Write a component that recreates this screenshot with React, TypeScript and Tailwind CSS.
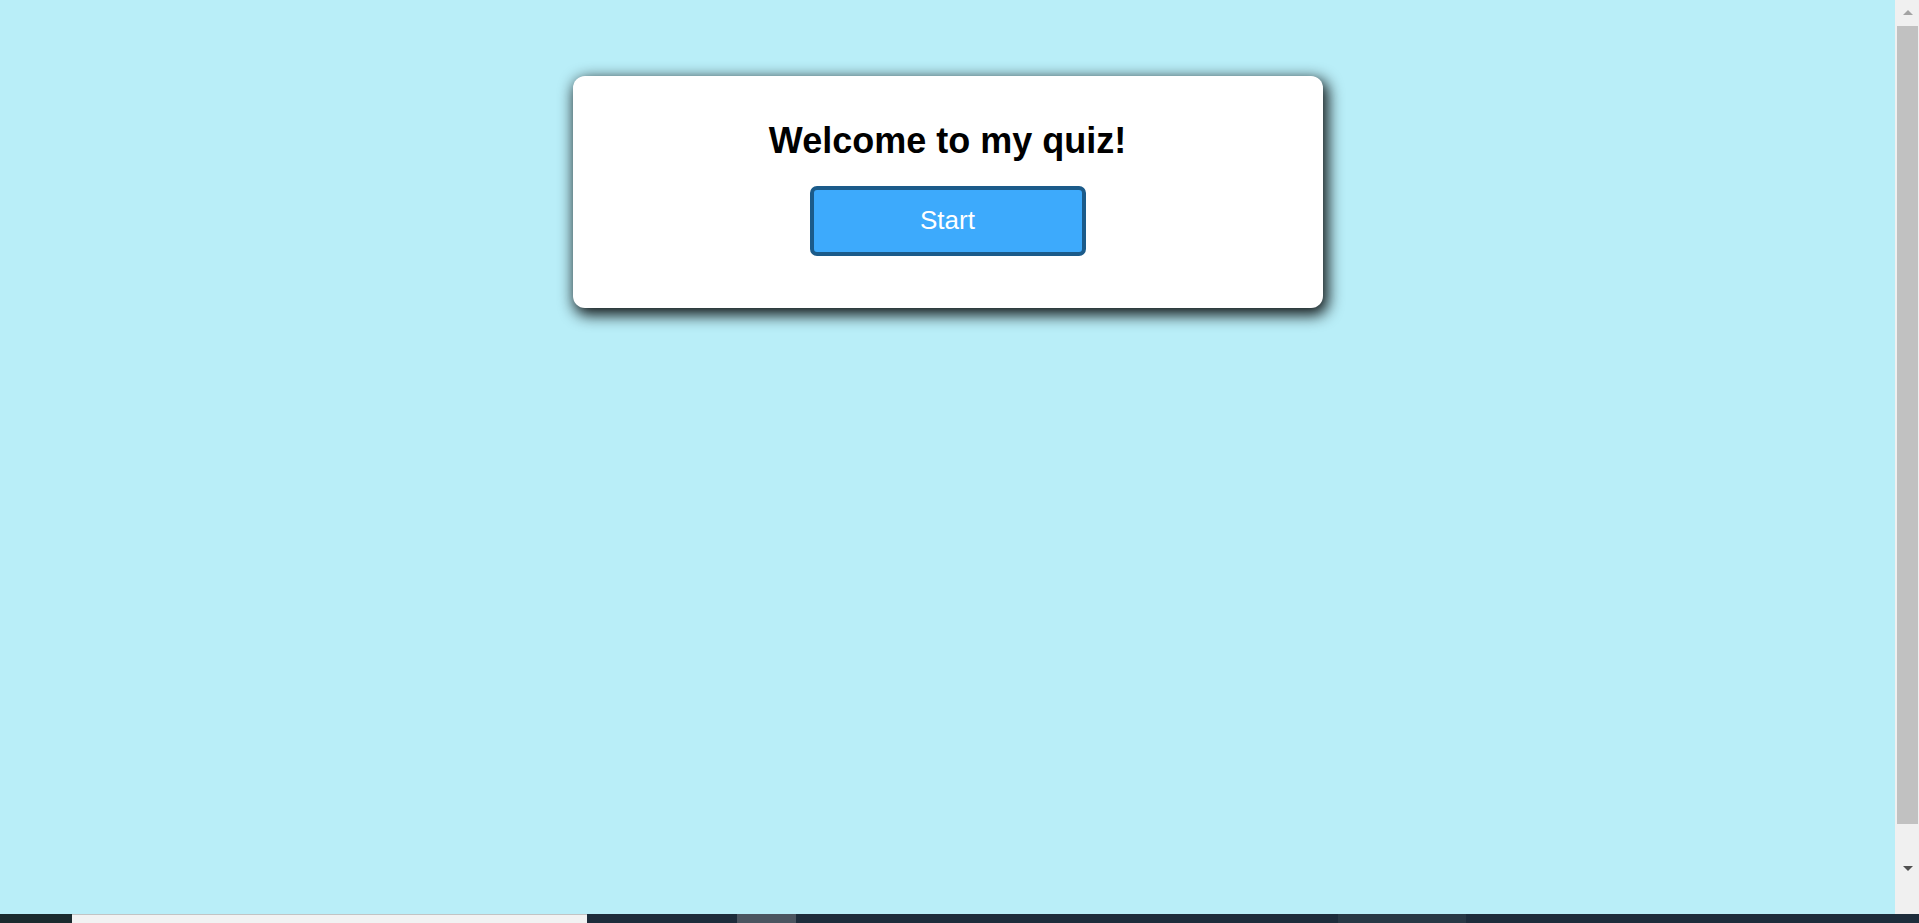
import React from "react";

export default function App() {
  return (
    <div className="flex h-[923px] w-full flex-col overflow-hidden" style={{ fontFamily: '"Liberation Sans", Arial, sans-serif' }}>
      <div className="flex min-h-0 flex-1">
        <main className="flex flex-1 flex-col items-center bg-[#b9eef8] pt-[76px]">
          <div className="flex w-[750px] flex-col items-center rounded-[12px] bg-white pt-[45px] pb-[52px] shadow-[3px_5px_15px_2px_rgba(0,0,0,0.92)]">
            <h1 className="text-[36px] font-bold leading-[40px] text-black">Welcome to my quiz!</h1>
            <button className="mt-[25px] flex h-[70px] w-[276px] items-center justify-center rounded-[7px] border-4 border-[#1b5b8a] bg-[#3daafc] pb-[2px] text-[26px] text-white">
              Start
            </button>
          </div>
        </main>
        <div className="flex w-[24px] flex-col bg-[#f0f0f0]">
          <div className="flex h-[26px] items-center justify-center pl-[2px]">
            <svg width="10" height="6" viewBox="0 0 10 6"><path d="M5 0 L10 5 L0 5 Z" fill="#a3a3a3" /></svg>
          </div>
          <div className="ml-[2px] mr-[1px] h-[798px] bg-[#c1c1c1]" />
          <div className="flex flex-1 items-center justify-center pl-[2px]">
            <svg width="10" height="6" viewBox="0 0 10 6"><path d="M0 0 L10 0 L5 5 Z" fill="#505050" /></svg>
          </div>
        </div>
      </div>
      <div className="flex h-[9px] bg-[#1d2c3b]">
        <div className="w-[72px] bg-[#1a2a2e]" />
        <div className="w-[515px] border-t border-[#c3c3c3] bg-[#f2f2f2]" />
        <div className="w-[150px]" />
        <div className="w-[59px] bg-[#4b5560]" />
        <div className="w-[542px]" />
        <div className="w-[128px] bg-[#283845]" />
        <div className="flex-1" />
      </div>
    </div>
  );
}
